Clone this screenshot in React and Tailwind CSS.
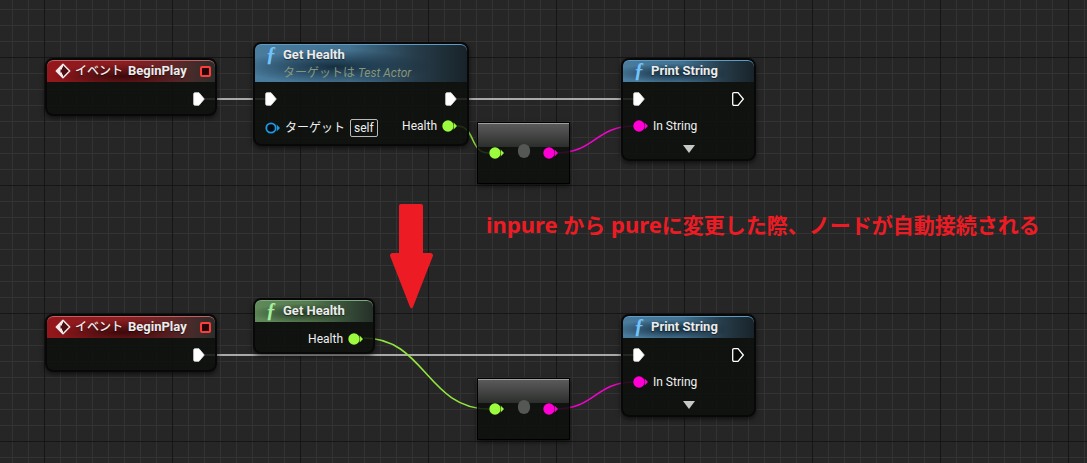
import React from "react";

const GREEN = "#9dfb3f";
const PINK = "#ff00d4";
const BLUE = "#1a9be6";

function ExecPin({ hollow = false }) {
  return (
    <svg width="12" height="14" viewBox="0 0 12 14" className="shrink-0" aria-hidden="true">
      <path
        d="M.7 2Q.7.7 2 .7H6L11.3 7 6 13.3H2Q.7 13.3.7 12Z"
        fill={hollow ? "#080a08" : "#fff"}
        stroke={hollow ? "#fff" : "#e4e4e4"}
        strokeWidth={hollow ? 1.3 : 0.8}
      />
    </svg>
  );
}

function DataPin({ color, hollow = false }) {
  return (
    <svg width="15" height="12" viewBox="0 0 15 12" className="shrink-0" aria-hidden="true">
      {hollow ? (
        <circle cx="6" cy="6" r="4.7" fill="#050a0e" stroke={color} strokeWidth="1.8" />
      ) : (
        <circle cx="6" cy="6" r="5.7" fill={color} />
      )}
      <path d="M11.6 2.6 15 6 11.6 9.4Q12.6 6 11.6 2.6Z" fill={color} />
    </svg>
  );
}

function EventIcon() {
  return (
    <svg width="16" height="16" viewBox="0 0 16 16" className="shrink-0" aria-hidden="true">
      <path d="M8 1.3 14.7 8 8 14.7 1.3 8Z" fill="#4a0f11" stroke="#f5eaea" strokeWidth="1.5" strokeLinejoin="round" />
      <path d="M8 1.3V4.6H7V6.5H5.500V9.500H7V11.400H8V14.7L1.3 8Z" fill="#f5eaea" />
    </svg>
  );
}

function FunctionIcon({ className }) {
  return (
    <span
      aria-hidden="true"
      className={`w-4 pb-0.5 text-center font-['Liberation_Serif',serif] text-[20px] leading-[18px] font-bold italic ${className}`}
    >
      ƒ
    </span>
  );
}

const HEADERS = {
  red: "bg-[radial-gradient(ellipse_at_45%_75%,rgba(40,4,6,.8),transparent_55%),linear-gradient(90deg,#94171b_0%,#8c1d20_45%,#60282a_75%,#292e2a_100%)] shadow-[inset_0_1px_0_#c06265]",
  blue: "bg-[radial-gradient(ellipse_at_38%_60%,rgba(16,38,54,.9),transparent_52%),linear-gradient(90deg,#4a7c9e_0%,#43718f_45%,#273d4b_75%,#182329_100%)] shadow-[inset_0_1px_0_#5c9cc5]",
  green: "bg-[radial-gradient(ellipse_at_40%_60%,rgba(28,46,28,.8),transparent_52%),linear-gradient(90deg,#608a59_0%,#557a50_45%,#38503a_75%,#253028_100%)] shadow-[inset_0_1px_0_#81a880]",
};

function Node({ place, tone, icon, title, subtitle, badge, children }) {
  return (
    <article
      className={`absolute rounded-lg border-2 border-[#070807] bg-[#0c0f0c]/85 shadow-[0_2px_5px_rgba(0,0,0,.6)] ${place}`}
    >
      <header className={`rounded-t-md ${HEADERS[tone]}`}>
        <div className="flex h-[22px] items-center gap-1 pr-1 pl-2">
          {icon}
          <h2 className="flex-1 whitespace-nowrap text-[13px] leading-5 font-bold text-[#ececec] [text-shadow:0_1px_1px_rgba(0,0,0,.5)]">
            {title}
          </h2>
          {badge}
        </div>
        {subtitle}
      </header>
      <div className="flex justify-between px-2.5 pt-1 text-[12px] text-[#f0f0f0]">{children}</div>
    </article>
  );
}

function Row({ children }) {
  return <div className="flex h-[26px] items-center gap-[5px] whitespace-nowrap">{children}</div>;
}

function EventNode({ place }) {
  return (
    <Node
      place={`h-[58px] w-[172px] ${place}`}
      tone="red"
      icon={<EventIcon />}
      title={
        <span className="flex gap-[5px]">
          <span className="text-[12px] font-medium">イベント</span>
          <span>BeginPlay</span>
        </span>
      }
      badge={<span className="size-[11px] rounded-xs border-2 border-[#ff3b3b] bg-[#240405]" />}
    >
      <span />
      <Row><ExecPin /></Row>
    </Node>
  );
}

function PrintNode({ place }) {
  return (
    <Node
      place={`h-[103px] w-[135px] ${place}`}
      tone="blue"
      icon={<FunctionIcon className="text-[#72c3fb]" />}
      title="Print String"
    >
      <div className="flex w-full flex-col gap-px">
        <div className="flex justify-between">
          <Row><ExecPin /></Row>
          <Row><ExecPin hollow /></Row>
        </div>
        <Row><DataPin color={PINK} />In String</Row>
        <button type="button" aria-label="Expand" className="flex h-[18px] items-center justify-center">
          <svg width="12" height="8" viewBox="0 0 12 8" aria-hidden="true">
            <path d="M0 0H12L6 8Z" fill="#c6c8c6" />
          </svg>
        </button>
      </div>
    </Node>
  );
}

function ConvertNode({ place }) {
  return (
    <article
      className={`absolute flex h-[62px] w-[93px] items-center justify-between border border-black bg-[#0c0f0c]/85 bg-[linear-gradient(#5c5c5c,#2c2e2c)] bg-[length:100%_24px] bg-no-repeat px-[11px] shadow-[0_2px_5px_rgba(0,0,0,.6),inset_0_1px_0_#a0a0a0] ${place}`}
    >
      <DataPin color={GREEN} />
      <span className="mb-1 h-[14px] w-3 rounded-full bg-[#555755]" />
      <DataPin color={PINK} />
    </article>
  );
}

function Wires() {
  return (
    <svg className="absolute top-0 left-0 h-[463px] w-[1087px]" fill="none" aria-hidden="true">
      <g stroke="#a9a9a9" strokeWidth="2">
        <path d="M205 99H266" />
        <path d="M457 99H634" />
        <path d="M205 355H634" />
      </g>
      <g strokeWidth="1.6">
        <path d="M457 126C476 126 469 153 489 153" stroke="#92e53e" />
        <path d="M364 338C425 338 427 409 489 409" stroke="#92e53e" />
        <path d="M557 153C594 153 596 126 634 126" stroke="#ee05c8" />
        <path d="M557 409C594 409 596 382 634 382" stroke="#ee05c8" />
      </g>
    </svg>
  );
}

const GRID =
  "bg-[#262626] bg-[linear-gradient(90deg,#161616_1px,transparent_1px),linear-gradient(#161616_1px,transparent_1px),linear-gradient(90deg,#333_1px,transparent_1px),linear-gradient(#333_1px,transparent_1px)] bg-[size:128px_128px,128px_128px,16px_16px,16px_16px] bg-[position:44px_0,0_57px,12px_0,0_9px]";

export default function App() {
  return (
    <main
      className={`relative min-h-screen w-full overflow-hidden font-[Roboto,'Noto_Sans_CJK_JP',sans-serif] ${GRID}`}
    >
      <Wires />

      <EventNode place="top-[58px] left-[45px]" />
      <ConvertNode place="top-[122px] left-[477px]" />
      <Node
        place="top-[42px] left-[253px] h-[104px] w-[216px]"
        tone="blue"
        icon={<FunctionIcon className="text-[#72c3fb]" />}
        title="Get Health"
        subtitle={
          <p className="h-4 pl-7 text-[12px] leading-[14px] whitespace-nowrap text-[#87957a]">
            ターゲットは <em>Test Actor</em>
          </p>
        }
      >
        <div className="flex flex-col gap-[3px]">
          <Row><ExecPin /></Row>
          <Row>
            <DataPin color={BLUE} hollow />
            <span>ターゲット</span>
            <span className="rounded-xs border border-[#b8b8b8] px-[3px] leading-4">self</span>
          </Row>
        </div>
        <div className="flex flex-col items-end gap-px">
          <Row><ExecPin /></Row>
          <Row>Health<DataPin color={GREEN} /></Row>
        </div>
      </Node>
      <PrintNode place="top-[58px] left-[621px]" />

      <EventNode place="top-[314px] left-[45px]" />
      <Node
        place="top-[298px] left-[253px] h-[56px] w-[122px]"
        tone="green"
        icon={<FunctionIcon className="text-[#a5efa0]" />}
        title="Get Health"
      >
        <span />
        <Row>Health<DataPin color={GREEN} /></Row>
      </Node>
      <ConvertNode place="top-[378px] left-[477px]" />
      <PrintNode place="top-[314px] left-[621px]" />

      <svg className="absolute top-[204px] left-[390px]" width="43" height="105" viewBox="0 0 43 105" aria-hidden="true">
        <path
          d="M11 0H31Q33 0 33 2V49H41Q44 50 42.5 53L23 103Q21.500 105.500 20 103L.5 53Q-1 50 2 49H9V2Q9 0 11 0Z"
          fill="#ed1c24"
        />
      </svg>
      <p className="absolute top-[208px] left-[486px] font-['Noto_Sans','Noto_Sans_CJK_JP',sans-serif] text-[21px] leading-8 font-bold whitespace-nowrap text-[#ed1c24]">
        <span className="text-[22px]">inpure </span>から
        <span className="text-[22px]"> pure</span>に変更した際、ノードが自動接続される
      </p>
    </main>
  );
}
